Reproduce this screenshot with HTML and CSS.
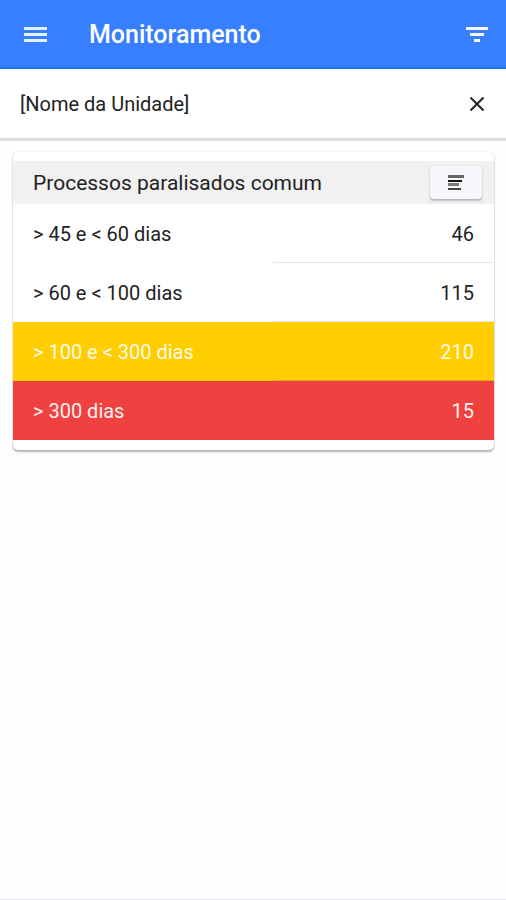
FILE: index.html
```html
<!DOCTYPE html>
<html lang="pt-BR">
<head>
<meta charset="utf-8">
<meta name="viewport" content="width=device-width, initial-scale=1">
<title>Monitoramento</title>
<link rel="stylesheet" href="styles.css">
</head>
<body>
<header class="toolbar">
  <button class="icon-button" type="button" aria-label="Menu">
    <svg width="24" height="18" viewBox="0 0 24 18"><path d="M1 1h23v3H1zM1 7h23v3H1zM1 13h23v3H1z" fill="#e4f1ff"/></svg>
  </button>
  <h1 class="toolbar-title">Monitoramento</h1>
  <button class="icon-button" type="button" aria-label="Filtrar">
    <svg width="22" height="18" viewBox="0 0 22 18"><path d="M0 1h22v3H0zM4 7h14v3H4zM8 13h6v3H8z" fill="#f4f9ff"/></svg>
  </button>
</header>
<div class="unit">
  <span>[Nome da Unidade]</span>
  <button class="icon-button" type="button" aria-label="Limpar unidade">
    <svg width="16" height="16" viewBox="0 0 16 16"><path d="M1.500 1.500l13 13M14.500 1.500l-13 13" stroke="#222" stroke-width="2" fill="none"/></svg>
  </button>
</div>
<main class="content">
  <section class="card">
    <div class="card-header">
      <h2 class="card-title">Processos paralisados comum</h2>
      <button class="list-button" type="button" aria-label="Ver lista">
        <svg width="16" height="16" viewBox="0 0 16 16"><path d="M0 0h16v3H0z" fill="#666"/><path d="M0 5h14v2H0z" fill="#111"/><path d="M0 8h11v3H0z" fill="#777"/><path d="M0 13h13v2H0z" fill="#444"/></svg>
      </button>
    </div>
    <table class="ranges">
      <tbody>
        <tr><th scope="row">&gt; 45 e &lt; 60 dias</th><td>46</td></tr>
        <tr><th scope="row">&gt; 60 e &lt; 100 dias</th><td>115</td></tr>
        <tr class="warning"><th scope="row">&gt; 100 e &lt; 300 dias</th><td>210</td></tr>
        <tr class="danger"><th scope="row">&gt; 300 dias</th><td>15</td></tr>
      </tbody>
    </table>
  </section>
</main>
</body>
</html>
```
FILE: styles.css
```css
* {
  box-sizing: border-box;
}

body {
  display: flex;
  flex-direction: column;
  min-height: 100vh;
  margin: 0;
  border-bottom: 1px solid #e3e2f5;
  background: #fefefe;
  color: #222;
  font-family: Roboto, "Liberation Sans", sans-serif;
  font-size: 20px;
  line-height: 24px;
}

button {
  display: flex;
  align-items: center;
  justify-content: center;
  margin: 0;
  padding: 0;
  border: 0;
  background: none;
  cursor: pointer;
}

.toolbar {
  display: flex;
  align-items: center;
  height: 69px;
  padding: 1px 12px 0;
  background: #387fff;
  box-shadow: inset 0 -2px #1c76ec;
  color: #fff;
}

.icon-button {
  width: 34px;
  height: 34px;
}

.icon-button:first-child {
  width: 46px;
}

.toolbar-title {
  flex: 1;
  margin: 0;
  padding-left: 31px;
  font-size: 25px;
  font-weight: 500;
  line-height: 32px;
}

.unit {
  display: flex;
  align-items: center;
  justify-content: space-between;
  height: 72px;
  padding: 0 12px 0 20px;
  border-bottom: 3px solid #dedede;
  background: #fff;
}

.content {
  padding: 11px 12px 12px 13px;
}

.card {
  padding: 9px 0 10px;
  border-radius: 5px;
  background: #fff;
  box-shadow: 0 2px 2px rgba(0, 0, 0, 0.28), 0 0 2px rgba(0, 0, 0, 0.14);
}

.card-header {
  display: flex;
  align-items: center;
  justify-content: space-between;
  height: 43px;
  padding: 0 12px 0 20px;
  background: #f1f1f1;
}

.card-title {
  margin: 0;
  font-size: 21px;
  font-weight: 400;
}

.list-button {
  width: 52px;
  height: 33px;
  border-radius: 4px;
  background: #f5f6fa;
  box-shadow: 0 2px 2px rgba(0, 0, 0, 0.22), 0 0 2px rgba(0, 0, 0, 0.1);
}

.ranges {
  width: 100%;
  border-spacing: 0;
}

.ranges th,
.ranges td {
  height: 59px;
  padding: 0 20px;
  font-weight: 400;
}

.ranges th {
  width: 54%;
  text-align: left;
}

.ranges td {
  box-shadow: inset 0 -1px #e6e6e6;
  text-align: right;
}

.warning {
  background: #ffce00;
  color: #fffbe8;
}

.danger {
  background: #f04141;
  color: #fff0ee;
}

.ranges .warning td {
  box-shadow: inset 0 -1px #e6a51c;
}

.ranges .danger td {
  box-shadow: none;
}
```
